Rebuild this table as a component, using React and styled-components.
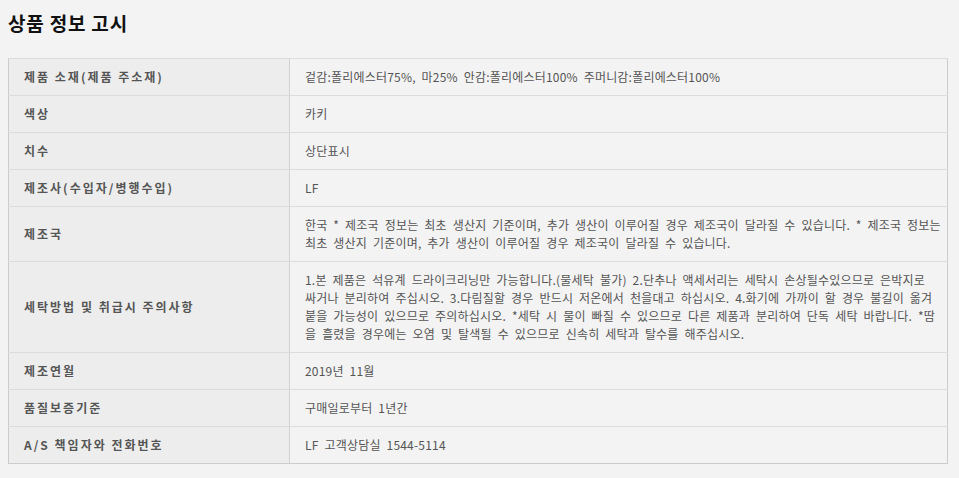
import React from 'react';
import styled, { createGlobalStyle } from 'styled-components';

const GlobalStyle = createGlobalStyle`
  html, body {
    margin: 0;
    padding: 0;
    background: #f3f3f3;
  }
  body {
    font-family: "Noto Sans CJK KR", "Noto Sans", sans-serif;
  }
`;

const Wrap = styled.section`
  padding: 8px 12px 14px 8px;
  width: 959px;
  box-sizing: border-box;
`;

const Title = styled.h2`
  margin: 0 0 20px;
  font-size: 19px;
  line-height: 30px;
  font-weight: 700;
  color: #111;
  letter-spacing: 0.8px;
`;

const Table = styled.table`
  width: 940px;
  border-collapse: collapse;
  table-layout: fixed;
  border: 1px solid #cccccc;
`;

const Row = styled.tr`
  border-top: 1px solid #dcdcdc;
`;

const Head = styled.th`
  width: 265px;
  padding: 9px 0 9px 15px;
  background: #ededed;
  border-right: 1px solid #d2d2d2;
  text-align: left;
  font-size: 12px;
  line-height: 18px;
  font-weight: 700;
  color: #555;
  letter-spacing: 2px;
`;

const Value = styled.td`
  padding: 9px 2px 9px 15px;
  font-size: 12px;
  line-height: 18px;
  color: #555;
  letter-spacing: 0.2px;
  word-spacing: 3px;
  white-space: nowrap;
`;

const rows = [
  ['제품 소재(제품 주소재)', ['겉감:폴리에스터75%, 마25% 안감:폴리에스터100% 주머니감:폴리에스터100%']],
  ['색상', ['카키']],
  ['치수', ['상단표시']],
  ['제조사(수입자/병행수입)', ['LF']],
  ['제조국', [
    '한국 * 제조국 정보는 최초 생산지 기준이며, 추가 생산이 이루어질 경우 제조국이 달라질 수 있습니다. * 제조국 정보는',
    '최초 생산지 기준이며, 추가 생산이 이루어질 경우 제조국이 달라질 수 있습니다.',
  ]],
  ['세탁방법 및 취급시 주의사항', [
    '1.본 제품은 석유계 드라이크리닝만 가능합니다.(물세탁 불가) 2.단추나 액세서리는 세탁시 손상될수있으므로 은박지로',
    '싸거나 분리하여 주십시오. 3.다림질할 경우 반드시 저온에서 천을대고 하십시오. 4.화기에 가까이 할 경우 불길이 옮겨',
    '붙을 가능성이 있으므로 주의하십시오. *세탁 시 물이 빠질 수 있으므로 다른 제품과 분리하여 단독 세탁 바랍니다. *땀',
    '을 흘렸을 경우에는 오염 및 탈색될 수 있으므로 신속히 세탁과 탈수를 해주십시오.',
  ]],
  ['제조연월', ['2019년 11월']],
  ['품질보증기준', ['구매일로부터 1년간']],
  ['A/S 책임자와 전화번호', ['LF 고객상담실 1544-5114']],
];

export default function App() {
  return (
    <>
      <GlobalStyle />
      <Wrap>
        <Title>상품 정보 고시</Title>
        <Table>
          <tbody>
            {rows.map(([k, lines]) => (
              <Row key={k}>
                <Head>{k}</Head>
                <Value>
                  {lines.map((l, i) => (
                    <React.Fragment key={i}>
                      {i > 0 && <br />}
                      {l}
                    </React.Fragment>
                  ))}
                </Value>
              </Row>
            ))}
          </tbody>
        </Table>
      </Wrap>
    </>
  );
}
